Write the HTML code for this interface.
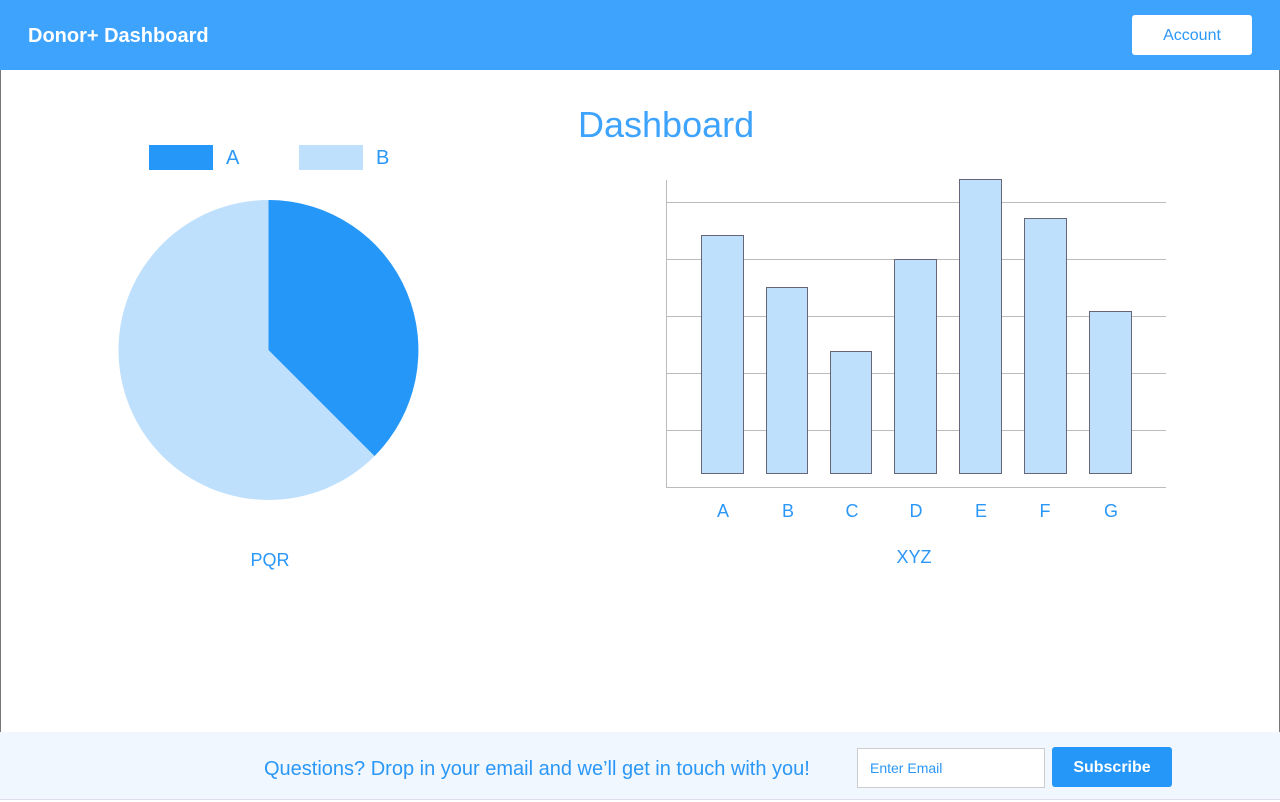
<!DOCTYPE html><html><head><style>
body{margin:0;width:1280px;height:802px;position:relative;font-family:"Liberation Sans",Arial,sans-serif;background:#fff;overflow:hidden}
.hdr{position:absolute;left:0;top:0;width:1280px;height:70px;background:#3ea3fc}
.hdr .t{position:absolute;left:28px;top:25px;color:#fff;font-weight:bold;font-size:20px}
.acc{position:absolute;left:1132px;top:15px;width:120px;height:40px;background:#fff;border-radius:3px;color:#2b97f7;font-size:16px;text-align:center;line-height:42px}
.bl{position:absolute;left:0;top:70px;width:1px;height:662px;background:#777}
.br{position:absolute;right:0;top:70px;width:1px;height:662px;background:#777}
.ft{position:absolute;left:0;top:732px;width:1280px;height:67px;background:#f0f7fe;border-bottom:1px solid #dde}
.blue{color:#2b97f7}
</style></head><body>
<div class="hdr"><div class="t">Donor+ Dashboard</div><div class="acc">Account</div></div>
<div class="bl"></div><div class="br"></div>
<div class="blue" style="position:absolute;left:578px;top:104px;font-size:36px;color:#3ea3fc">Dashboard</div>
<div style="position:absolute;left:149px;top:145px;width:64px;height:25px;background:#2597f8"></div>
<div class="blue" style="position:absolute;left:226px;top:147px;font-size:20px">A</div>
<div style="position:absolute;left:299px;top:145px;width:64px;height:25px;background:#bfe0fc"></div>
<div class="blue" style="position:absolute;left:376px;top:147px;font-size:20px">B</div>
<svg style="position:absolute;left:0;top:0" width="1280" height="802">
<circle cx="268.5" cy="350" r="150" fill="#bfe0fc"/>
<path d="M268.5 350 L268.5 200 A150 150 0 0 1 374.5 456 Z" fill="#2597f8"/>
<g stroke="#bbb" stroke-width="1">
<line x1="666" y1="202.5" x2="1166" y2="202.5"/><line x1="666" y1="259.5" x2="1166" y2="259.5"/><line x1="666" y1="316.5" x2="1166" y2="316.5"/><line x1="666" y1="373.5" x2="1166" y2="373.5"/><line x1="666" y1="430.5" x2="1166" y2="430.5"/><line x1="666" y1="487.5" x2="1166" y2="487.5"/><line x1="666.5" y1="180" x2="666.5" y2="487"/></g>
<g fill="#bfe0fc" stroke="#667" stroke-width="1">
<rect x="701.5" y="235.5" width="42" height="238"/><rect x="766.5" y="287.5" width="41" height="186"/><rect x="830.5" y="351.5" width="41" height="122"/><rect x="894.5" y="259.5" width="42" height="214"/><rect x="959.5" y="179.5" width="42" height="294"/><rect x="1024.5" y="218.5" width="42" height="255"/><rect x="1089.5" y="311.5" width="42" height="162"/></g>
<g fill="#2b97f7" font-size="18" font-family="Liberation Sans" text-anchor="middle">
<text x="723" y="517">A</text><text x="788" y="517">B</text><text x="852" y="517">C</text><text x="916" y="517">D</text><text x="981" y="517">E</text><text x="1045" y="517">F</text><text x="1111" y="517">G</text>
<text x="914" y="563">XYZ</text><text x="270" y="566">PQR</text></g>
</svg>
<div class="ft">
<div class="blue" style="position:absolute;left:264px;top:26px;font-size:20px">Questions? Drop in your email and we’ll get in touch with you!</div>
<div style="position:absolute;left:857px;top:16px;background:#fff;border:1px solid #ccc;color:#2b97f7;font-size:14px;line-height:38px;padding-left:12px;box-sizing:border-box;width:188px;height:40px">Enter Email</div>
<div style="position:absolute;left:1052px;top:15px;width:120px;height:40px;background:#2597f8;border-radius:3px;color:#fff;font-weight:bold;font-size:16px;text-align:center;line-height:42px">Subscribe</div>
</div>
</body></html>
